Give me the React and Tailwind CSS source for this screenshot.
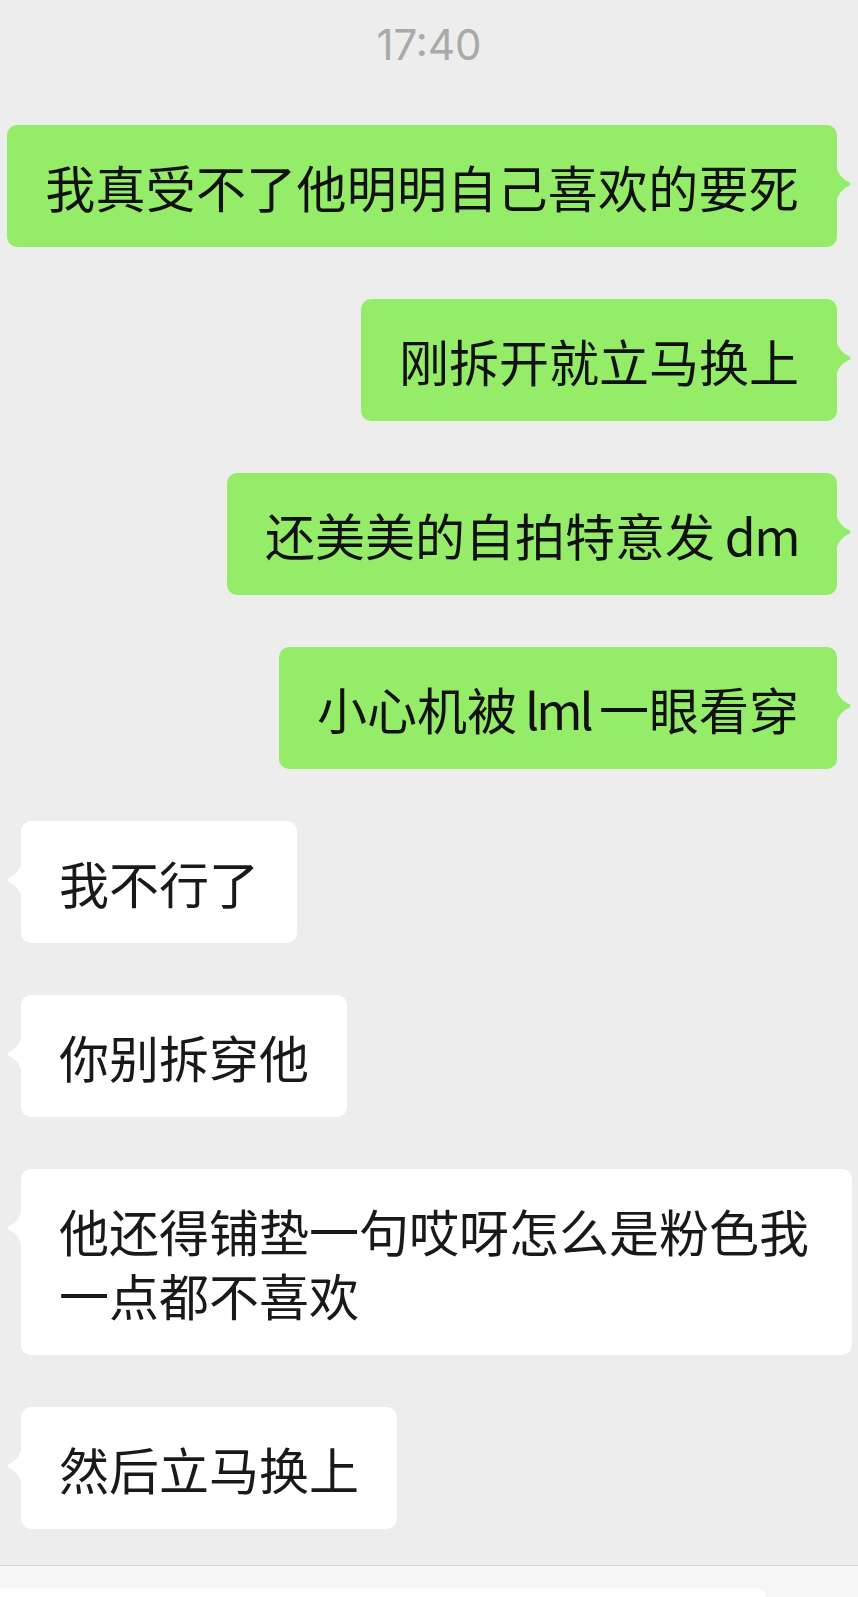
import React from "react";

function Bubble({ mine, children }) {
  return (
    <div className={mine ? "flex justify-end pr-[21px] pl-[2px]" : "flex justify-start pl-[21px] pr-[6px]"}>
      <div
        className={
          mine
            ? "relative max-w-[831px] rounded-[10px] bg-[#95ec69] px-[38px] py-[29px] text-[50px] leading-[64px] text-[#111111] font-['Noto_Sans_CJK_SC',sans-serif]"
            : "relative max-w-[831px] rounded-[10px] bg-white px-[38px] py-[29px] text-[50px] leading-[64px] text-[#191919] font-['Noto_Sans_CJK_SC',sans-serif]"
        }
      >
        {children}
        {mine ? (
          <svg className="absolute -right-[15px] top-[39px] h-[40px] w-[16px]" viewBox="0 0 16 40">
            <path d="M0 0 C1 9 6 15 13 18 Q16 20 13 22 C6 25 1 31 0 40 Z" fill="#95ec69" />
          </svg>
        ) : (
          <svg className="absolute -left-[15px] top-[39px] h-[40px] w-[16px]" viewBox="0 0 16 40">
            <path d="M16 0 C15 9 10 15 3 18 Q0 20 3 22 C10 25 15 31 16 40 Z" fill="#ffffff" />
          </svg>
        )}
      </div>
    </div>
  );
}

export default function App() {
  return (
    <div className="flex h-[1597px] w-full flex-col overflow-hidden bg-[#ededed]">
      <div className="flex flex-1 flex-col">
        <div className="flex h-[88px] items-center justify-center text-[42px] text-[#a9a9a9] font-['Inter',sans-serif]">
          17:40
        </div>
        <div className="mt-[37px] flex flex-col gap-[52px]">
          <Bubble mine>
            <span className="whitespace-nowrap tracking-[0.25px]">我真受不了他明明自己喜欢的要死</span>
          </Bubble>
          <Bubble mine>刚拆开就立马换上</Bubble>
          <Bubble mine>
            还美美的自拍特意发<span className="tracking-[-1.5px]"> dm</span>
          </Bubble>
          <Bubble mine>
            小心机被<span className="tracking-[-3px]"> lml </span>一眼看穿
          </Bubble>
          <Bubble>我不行了</Bubble>
          <Bubble>你别拆穿他</Bubble>
          <Bubble>他还得铺垫一句哎呀怎么是粉色我一点都不喜欢</Bubble>
          <Bubble>然后立马换上</Bubble>
        </div>
      </div>
      <div className="h-[32px] border-t border-[#d6d6d6] bg-[#f6f6f6] pt-[22px]">
        <div className="h-[20px] w-[766px] rounded-tr-[10px] bg-white"></div>
      </div>
    </div>
  );
}
